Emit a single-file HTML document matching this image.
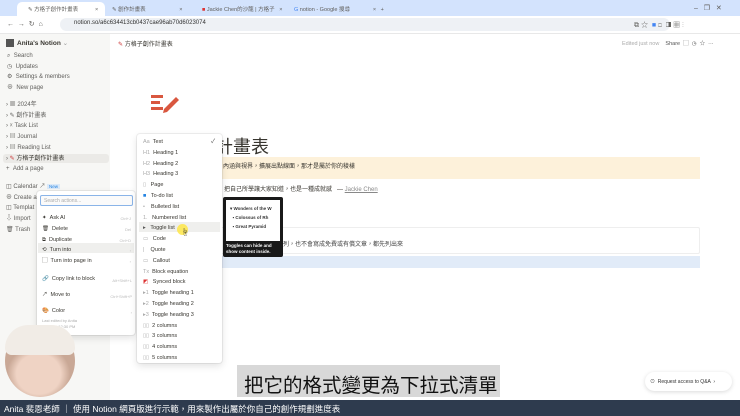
<!DOCTYPE html><html><head><meta charset="utf-8"><style>
*{margin:0;padding:0;box-sizing:border-box}
body{width:740px;height:416px;overflow:hidden;position:relative;background:#fff;font-family:"Liberation Sans","Noto Sans CJK TC",sans-serif;color:#37352f}
.a{position:absolute;white-space:nowrap}
.s{font-size:6px;color:#5f5e5b}
.m{font-size:5.5px;color:#37352f}
</style></head><body>
<div class="a" style="left:0;top:0;width:740px;height:16px;background:#d3e3fd"></div>
<div class="a" style="left:17px;top:2px;width:88px;height:14px;background:#fff;border-radius:5px 5px 0 0"></div>
<div class="a s" style="left:28px;top:5px;font-size:5.5px">✎ 方格子創作計畫表 &nbsp;&nbsp;&nbsp;&nbsp;&nbsp;&nbsp;&nbsp;&nbsp;&nbsp;&nbsp;×</div>
<div class="a s" style="left:112px;top:5px;font-size:5.5px">✎ 創作計畫表 &nbsp;&nbsp;&nbsp;&nbsp;&nbsp;&nbsp;&nbsp;&nbsp;&nbsp;&nbsp;&nbsp;&nbsp;&nbsp;&nbsp;&nbsp;&nbsp;&nbsp;&nbsp;&nbsp;&nbsp;&nbsp;×</div>
<div class="a s" style="left:202px;top:5px;font-size:5.5px"><span style="color:#d33">■</span> Jackie Chen的沙龍 | 方格子 &nbsp;&nbsp;×</div>
<div class="a s" style="left:294px;top:5px;font-size:5.5px"><span style="color:#4285f4">G</span> notion - Google 搜尋 &nbsp;&nbsp;&nbsp;&nbsp;&nbsp;&nbsp;&nbsp;&nbsp;&nbsp;&nbsp;&nbsp;&nbsp;&nbsp;&nbsp;× &nbsp;&nbsp;+</div>
<div class="a s" style="left:694px;top:4px;font-size:7px">– &nbsp;&nbsp;❐ &nbsp;&nbsp;✕</div>
<div class="a" style="left:0;top:16px;width:740px;height:18px;background:#fff;border-bottom:1px solid #e8e8e8"></div>
<div class="a" style="left:60px;top:18px;height:13px;background:#eef1f5;border-radius:7px;width:610px"></div>
<div class="a s" style="left:7px;top:20px;font-size:7px">← &nbsp;→ &nbsp;↻ &nbsp;⌂</div>
<div class="a s" style="left:74px;top:20px;font-size:6px;color:#333">notion.so/a6c634413cb0437cae96ab70d6023074</div>
<div class="a s" style="left:634px;top:20px;font-size:7px">⧉ ☆ &nbsp;<span style="color:#4285f4">■</span> ◻ &nbsp;◨ ▦ ⋮</div>
<div class="a" style="left:0;top:34px;width:110px;height:366px;background:#f7f7f5"></div>
<div class="a" style="left:6px;top:39px;width:8px;height:8px;background:#555"></div>
<div class="a" style="left:17px;top:39px;font-size:6.5px;font-weight:bold;color:#37352f">Anita's Notion <span style="font-weight:normal;color:#999">⌄</span></div>
<div class="a s" style="left:7px;top:51px;line-height:10.7px">⌕ &nbsp;Search<br>◷ &nbsp;Updates<br>⚙ &nbsp;Settings &amp; members<br>⊕ &nbsp;New page</div>
<div class="a" style="left:3px;top:154px;width:106px;height:9px;background:#ebeae7;border-radius:3px"></div>
<div class="a s" style="left:6px;top:100px;line-height:10.7px">› ▦ 2024年<br>› ✎ 創作計畫表<br>› ☓ Task List<br>› ▤ Journal<br>› ▤ Reading List<br>› <span style="color:#c33">✎</span> <span style="color:#37352f">方格子創作計畫表</span><br>+ &nbsp;Add a page</div>
<div class="a s" style="left:6px;top:182px;line-height:10.7px">◫ Calendar ↗ <span style="background:#dbe9f8;color:#2383e2;font-size:4.5px;padding:0 2px">New</span><br>⊕ Create a<br>◫ Templat<br>⇩ Import<br>🗑 Trash</div>
<div class="a s" style="left:118px;top:39px;font-size:6px;color:#37352f"><span style="color:#c33">✎</span> 方格子創作計畫表</div>
<div class="a s" style="left:622px;top:39px;color:#aaa;font-size:5.5px">Edited just now &nbsp;&nbsp;&nbsp;<span style="color:#555">Share &nbsp;▢ &nbsp;◷ &nbsp;☆ &nbsp;···</span></div>
<svg class="a" style="left:150px;top:93px" width="30" height="20"><g fill="#d9573f"><rect x="1" y="2" width="12" height="3"/><rect x="1" y="8" width="9" height="3"/><rect x="1" y="14" width="12" height="3"/><path d="M14 16 L26 4 L29 7 L17 19 L13 20 Z"/></g></svg>
<div class="a" style="left:140px;top:157px;width:560px;height:22px;background:#fdf1da"></div>
<div class="a" style="left:223px;top:161px;font-size:6px;color:#37352f">內涵與視界，擴展出點線面，那才是屬於你的稜樣</div>
<div class="a" style="left:215px;top:133px;font-size:18px;color:#37352f">計畫表</div>
<div class="a" style="left:224px;top:184px;font-size:6px;color:#37352f">把自己所學讓大家知道，也是一種成就感 &nbsp;&nbsp;— <u style="color:#888">Jackie Chen</u></div>
<div class="a" style="left:140px;top:227px;width:560px;height:27px;border:1px solid #eee;border-radius:2px"></div>
<div class="a" style="left:283px;top:239px;font-size:6px;color:#444">列，也不會寫成免費或有償文章，都先列出來</div>
<div class="a" style="left:140px;top:256px;width:560px;height:12px;background:#e1ebf8"></div>
<div class="a" style="left:223px;top:197px;width:60px;height:60px;background:#191919;border-radius:2px"></div>
<div class="a" style="left:226px;top:200px;width:54px;height:41px;background:#fff;font-size:4.5px;font-weight:bold;color:#333;padding:4px;line-height:9px">▾ Wonders of the W<br>&nbsp;&nbsp;▪ Colossus of Rh<br>&nbsp;&nbsp;▪ Great Pyramid</div>
<div class="a" style="left:226px;top:243px;font-size:4.5px;color:#fff;font-weight:bold;line-height:6px">Toggles can hide and<br>show content inside.</div>
<div class="a" style="left:37px;top:191px;width:98px;height:144px;background:#fff;box-shadow:0 0 0 1px rgba(0,0,0,.06),0 3px 8px rgba(0,0,0,.12);border-radius:3px"></div>
<div class="a" style="left:40px;top:195px;width:93px;height:11px;border:1px solid #8ab4e8;border-radius:2px;font-size:5px;color:#aaa;padding:2px 3px;background:#fafafa">Search actions...</div>
<div class="a" style="left:38px;top:243px;width:96px;height:10px;background:#efefed"></div>
<div class="a m" style="left:42px;top:213px;line-height:10.8px">✦ &nbsp;Ask AI<br>🗑 &nbsp;Delete<br>⧉ &nbsp;Duplicate<br>⟲ &nbsp;Turn into<br>▢ &nbsp;Turn into page in</div>
<div class="a" style="left:119px;top:214px;line-height:10.8px;color:#bbb;font-size:4px;text-align:right;width:12px">Ctrl+J<br>Del<br>Ctrl+D<br>›<br>›</div>
<div class="a m" style="left:42px;top:272px;line-height:15.8px">🔗 &nbsp;Copy link to block<br>↗ &nbsp;Move to<br>🎨 &nbsp;Color</div>
<div class="a" style="left:105px;top:273px;font-size:4px;color:#bbb;line-height:15.8px;text-align:right;width:27px">Alt+Shift+L<br>Ctrl+Shift+P<br>›</div>
<div class="a" style="left:42px;top:318px;font-size:4px;color:#aaa;line-height:6px">Last edited by Anita<br>Today at 12:30 PM</div>
<div class="a" style="left:137px;top:134px;width:85px;height:229px;background:#fff;box-shadow:0 0 0 1px rgba(0,0,0,.06),0 3px 8px rgba(0,0,0,.12);border-radius:3px"></div>
<div class="a" style="left:139px;top:222px;width:81px;height:10px;background:#efefed"></div>
<div class="a m" style="left:143px;top:137px;line-height:10.8px"><span style="color:#aaa">Aa</span> &nbsp;Text<br><span style="color:#aaa">H1</span> &nbsp;Heading 1<br><span style="color:#aaa">H2</span> &nbsp;Heading 2<br><span style="color:#aaa">H3</span> &nbsp;Heading 3<br><span style="color:#aaa">▯</span> &nbsp;&nbsp;Page<br><span style="color:#2383e2">■</span> &nbsp;&nbsp;To-do list<br><span style="color:#aaa">•</span> &nbsp;&nbsp;&nbsp;Bulleted list<br><span style="color:#aaa">1.</span> &nbsp;&nbsp;Numbered list<br><span style="color:#555">▸</span> &nbsp;&nbsp;Toggle list<br><span style="color:#aaa">▭</span> &nbsp;&nbsp;Code<br><span style="color:#aaa">|</span> &nbsp;&nbsp;&nbsp;Quote<br><span style="color:#aaa">▭</span> &nbsp;&nbsp;Callout<br><span style="color:#aaa">Tx</span> &nbsp;Block equation<br><span style="color:#d33">◩</span> &nbsp;&nbsp;Synced block<br><span style="color:#aaa">▸1</span> &nbsp;Toggle heading 1<br><span style="color:#aaa">▸2</span> &nbsp;Toggle heading 2<br><span style="color:#aaa">▸3</span> &nbsp;Toggle heading 3<br><span style="color:#aaa">▯▯</span> &nbsp;2 columns<br><span style="color:#aaa">▯▯</span> &nbsp;3 columns<br><span style="color:#aaa">▯▯</span> &nbsp;4 columns<br><span style="color:#aaa">▯▯</span> &nbsp;5 columns</div>
<div class="a" style="left:211px;top:136px;font-size:6px;color:#555">✓</div>
<div class="a" style="left:177px;top:224px;width:11px;height:11px;border-radius:50%;background:rgba(255,230,60,.8)"></div>
<div class="a" style="left:181px;top:227px;font-size:8px">☝</div>
<div class="a" style="left:5px;top:325px;width:70px;height:72px;border-radius:50%;background:radial-gradient(ellipse 45% 40% at 48% 68%,#efd3c4 0 70%,#c9a896 100%),#eee;overflow:hidden"></div>
<div class="a" style="left:5px;top:325px;width:70px;height:30px;border-radius:35px 35px 10px 10px;background:#f1ece6"></div>
<div class="a" style="left:237px;top:365px;width:263px;height:32px;background:#d8d8d8"></div>
<div class="a" style="left:244px;top:369px;font-size:19.5px;color:#111">把它的格式變更為下拉式清單</div>
<div class="a" style="left:645px;top:372px;width:87px;height:19px;border-radius:10px;background:#fff;box-shadow:0 1px 4px rgba(0,0,0,.15);font-size:5px;color:#333;padding:6px 5px">⊙ &nbsp;Request access to Q&amp;A &nbsp;›</div>
<div class="a" style="left:0;top:400px;width:740px;height:16px;background:#2e3b4e;color:#fff;font-size:8.5px;padding:3px 4px">Anita 裴恩老師 ｜ 使用 Notion 網頁版進行示範，用來製作出屬於你自己的創作規劃進度表</div>
</body></html>
